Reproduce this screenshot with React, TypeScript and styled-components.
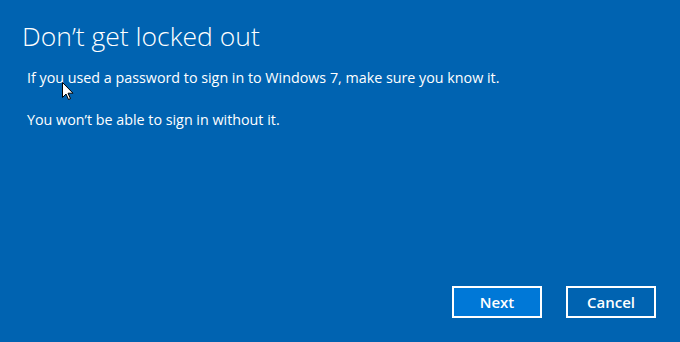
import styled, { createGlobalStyle } from 'styled-components';

const GlobalStyle = createGlobalStyle`
  html, body {
    margin: 0;
    padding: 0;
    background: #0063b1;
  }
  #root {
    height: 342px;
  }
`;

const Page = styled.div`
  position: relative;
  box-sizing: border-box;
  width: 680px;
  height: 342px;
  background: #0063b1;
  color: #ffffff;
  font-family: 'Open Sans', 'Noto Sans', sans-serif;
  display: flex;
  flex-direction: column;
  padding: 18px 24px 24px 22px;
  overflow: hidden;
`;

const Title = styled.h1`
  margin: 0;
  font-size: 26.5px;
  font-weight: 300;
  line-height: 36px;
`;

const Body = styled.div`
  margin-top: 14px;
  padding-left: 5px;
  display: flex;
  flex-direction: column;
  gap: 22px;
  flex: 1;
`;

const Paragraph = styled.p`
  margin: 0;
  font-size: 14.3px;
  line-height: 20px;
`;

const Actions = styled.div`
  display: flex;
  justify-content: flex-end;
  gap: 24px;
`;

const Button = styled.button<{ $primary?: boolean }>`
  box-sizing: border-box;
  width: 90px;
  height: 32px;
  border: 2px solid #ffffff;
  background: ${({ $primary }) => ($primary ? '#0078d7' : '#0063b1')};
  color: #ffffff;
  font-family: 'Open Sans', 'Noto Sans', sans-serif;
  font-size: 15px;
  font-weight: 600;
  padding: 0;
  cursor: pointer;
`;

const Cursor = styled.svg`
  position: absolute;
  left: 62px;
  top: 82px;
  pointer-events: none;
`;

export default function App() {
  return (
    <>
      <GlobalStyle />
      <Page>
        <Title>Don’t get locked out</Title>
        <Body>
          <Paragraph>If you used a password to sign in to Windows 7, make sure you know it.</Paragraph>
          <Paragraph>You won’t be able to sign in without it.</Paragraph>
        </Body>
        <Actions>
          <Button $primary>Next</Button>
          <Button>Cancel</Button>
        </Actions>
        <Cursor width="12" height="19" viewBox="0 0 12 19">
          <path
            d="M0.5 0.5 L0.5 15.5 L4 12 L6.5 17.5 L8.5 16.6 L6 11.2 L11 11.2 Z"
            fill="#ffffff"
            stroke="#000000"
            strokeWidth="1"
            strokeLinejoin="miter"
          />
        </Cursor>
      </Page>
    </>
  );
}
